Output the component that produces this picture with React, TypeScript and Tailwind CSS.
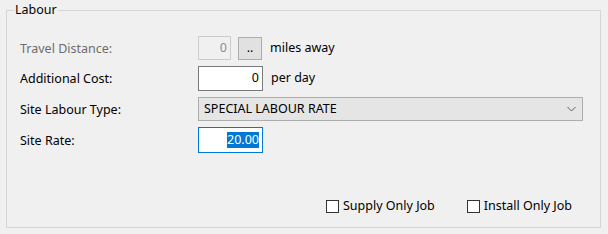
import React from 'react';

const font = { fontFamily: '"Noto Sans", "Segoe UI", sans-serif' };

const App: React.FC = () => {
    return (
        <div className="w-[608px] h-[234px] bg-[#f0f0f0] pt-[10px] pl-[6px] text-[12.5px] text-[#000]" style={font}>
            <div className="relative w-[595px] h-[218px] border border-[#d5d5d5]">
                {/* group caption sits over the top border */}
                <span className="absolute left-[7px] top-[-9px] px-[1px] bg-[#f0f0f0] leading-[16px]">Labour</span>

                <div className="flex flex-col pl-[13px] pt-[25px]">
                    <div className="flex items-center h-[24px]">
                        <span className="w-[178px] text-[#6d6d6d] pt-[2px]">Travel Distance:</span>
                        <div className="w-[33px] h-[24px] border border-[#cccccc] bg-[#f0f0f0] text-[#8d8d8d] flex items-center justify-end pr-[3px]">0</div>
                        <div className="ml-[7px] w-[24px] h-[23px] mt-[1px] border border-[#adadad] bg-[#e1e1e1] flex items-center justify-center leading-none">..</div>
                        <span className="ml-[8px]">miles away</span>
                    </div>

                    <div className="flex items-center h-[25px] mt-[6px]">
                        <span className="w-[178px] pt-[2px]">Additional Cost:</span>
                        <div className="w-[65px] h-[25px] border border-[#7a7a7a] bg-white flex items-center justify-end pr-[3px]">0</div>
                        <span className="ml-[8px]">per day</span>
                    </div>

                    <div className="flex items-center h-[24px] mt-[6px]">
                        <span className="w-[178px] pt-[3px]">Site Labour Type:</span>
                        <div className="w-[385px] h-[24px] border border-[#adadad] bg-[#e5e5e5] flex items-center justify-between pl-[5px] pr-[6px]">
                            <span>SPECIAL LABOUR RATE</span>
                            <svg width="9" height="6" viewBox="0 0 9 6" fill="none">
                                <path d="M0.5 1 L4.5 5 L8.5 1" stroke="#606060" strokeWidth="1" />
                            </svg>
                        </div>
                    </div>

                    <div className="flex items-center h-[26px] mt-[6px]">
                        <span className="w-[178px] pt-[2px]">Site Rate:</span>
                        <div className="w-[65px] h-[26px] border border-[#0078d7] bg-white flex items-center justify-end pr-[3px]">
                            <span className="bg-[#0078d7] text-white leading-[16px]">20.00</span>
                        </div>
                    </div>
                </div>

                <div className="flex items-center justify-end gap-[32px] pr-[28px] mt-[44px]">
                    <label className="flex items-center gap-[4px]">
                        <span className="w-[13px] h-[13px] border border-[#333] bg-white" />
                        <span>Supply Only Job</span>
                    </label>
                    <label className="flex items-center gap-[4px]">
                        <span className="w-[13px] h-[13px] border border-[#333] bg-white" />
                        <span>Install Only Job</span>
                    </label>
                </div>
            </div>
        </div>
    );
};

export default App;
